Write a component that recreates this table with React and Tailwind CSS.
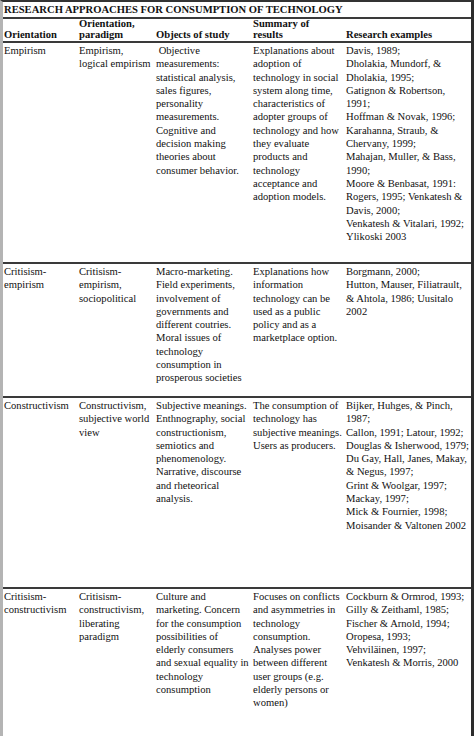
const rows = [
  {
    h: "h-[221px]",
    cells: [
      ["Empirism"],
      ["Empirism,", "logical empirism"],
      ["\u00a0Objective", "measurements:", "statistical analysis,", "sales figures,", "personality", "measurements.", "Cognitive and", "decision making", "theories about", "consumer behavior."],
      ["Explanations about", "adoption of", "technology in social", "system along time,", "characteristics of", "adopter groups of", "technology and how", "they evaluate", "products and", "technology", "acceptance and", "adoption models."],
      ["Davis, 1989;", "Dholakia, Mundorf, &", "Dholakia, 1995;", "Gatignon & Robertson,", "1991;", "Hoffman & Novak, 1996;", "Karahanna, Straub, &", "Chervany, 1999;", "Mahajan, Muller, & Bass,", "1990;", "Moore & Benbasat, 1991:", "Rogers, 1995; Venkatesh &", "Davis, 2000;", "Venkatesh & Vitalari, 1992;", "Ylikoski 2003"],
    ],
  },
  {
    h: "h-[134px]",
    cells: [
      ["Critisism-", "empirism"],
      ["Critisism-", "empirism,", "sociopolitical"],
      ["Macro-marketing.", "Field experiments,", "involvement of", "governments and", "different coutries.", "Moral issues of", "technology", "consumption in", "prosperous societies"],
      ["Explanations how", "information", "technology can be", "used as a public", "policy and as a", "marketplace option."],
      ["Borgmann, 2000;", "Hutton, Mauser, Filiatrault,", "& Ahtola, 1986; Uusitalo", "2002"],
    ],
  },
  {
    h: "h-[191px]",
    cells: [
      ["Constructivism"],
      ["Constructivism,", "subjective world", "view"],
      ["Subjective meanings.", "Enthnography, social", "constructionism,", "semiotics and", "phenomenology.", "Narrative, discourse", "and rheteorical", "analysis."],
      ["The consumption of", "technology has", "subjective meanings.", "Users as producers."],
      ["Bijker, Huhges, & Pinch,", "1987;", "Callon, 1991; Latour, 1992;", "Douglas & Isherwood, 1979;", "Du Gay, Hall, Janes, Makay,", "& Negus, 1997;", "Grint & Woolgar, 1997;", "Mackay, 1997;", "Mick & Fournier, 1998;", "Moisander & Valtonen 2002"],
    ],
  },
  {
    h: "flex-1",
    cells: [
      ["Critisism-", "constructivism"],
      ["Critisism-", "constructivism,", "liberating", "paradigm"],
      ["Culture and", "marketing. Concern", "for the consumption", "possibilities of", "elderly consumers", "and sexual equality in", "technology", "consumption"],
      ["Focuses on conflicts", "and asymmetries in", "technology", "consumption.", "Analyses power", "between different", "user groups (e.g.", "elderly persons or", "women)"],
      ["Cockburn & Ormrod, 1993;", "Gilly & Zeithaml, 1985;", "Fischer & Arnold, 1994;", "Oropesa, 1993;", "Vehviläinen, 1997;", "Venkatesh & Morris, 2000"],
    ],
  },
];

const header = [
  ["Orientation"],
  ["Orientation,", "paradigm"],
  ["Objects of study"],
  ["Summary of", "results"],
  ["Research examples"],
];

const cols = "grid grid-cols-[75px_77px_97px_93px_1fr]";

function Lines({ lines }) {
  return lines.map((l, i) => (
    <div key={i} className="whitespace-nowrap">{l}</div>
  ));
}

export default function App() {
  return (
    <div className="w-[474px] h-[736px] overflow-hidden bg-white text-[#111] font-['Liberation_Serif','Times_New_Roman',serif] text-[10.6px] leading-[13.3px] border-l-[3px] border-l-[#b4b4b4] border-r-[3px] border-r-[#2c2c2c] border-t-2 border-t-[#333] flex flex-col">
      <div className="h-[17px] shrink-0 border-b-2 border-[#3a3a3a] pl-px font-bold leading-[15px] whitespace-nowrap">
        RESEARCH APPROACHES FOR CONSUMPTION OF TECHNOLOGY
      </div>
      <div className={`${cols} h-[24px] shrink-0 border-b-2 border-[#3a3a3a] font-bold leading-[10.5px]`}>
        {header.map((c, i) => (
          <div key={i} className="flex flex-col justify-end pl-px pb-[2px]">
            <Lines lines={c} />
          </div>
        ))}
      </div>
      {rows.map((r, i) => (
        <div
          key={i}
          className={`${cols} ${r.h} shrink-0 ${i < rows.length - 1 ? "border-b-2 border-[#3a3a3a]" : ""}`}
        >
          {r.cells.map((c, j) => (
            <div key={j} className="pl-px pt-px">
              <Lines lines={c} />
            </div>
          ))}
        </div>
      ))}
    </div>
  );
}
